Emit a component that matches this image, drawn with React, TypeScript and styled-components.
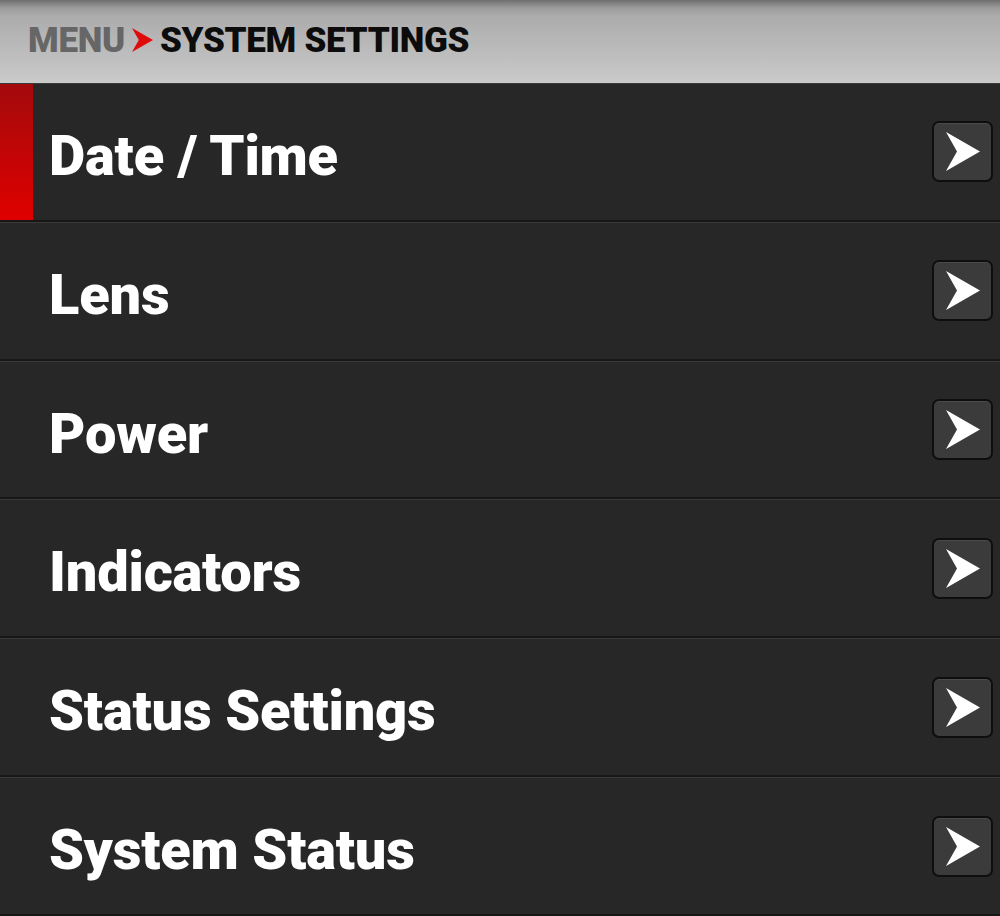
import React, { FunctionComponent } from "react";
import styled, { createGlobalStyle } from "styled-components";

const GlobalStyle = createGlobalStyle`
  html, body {
    margin: 0;
    padding: 0;
    background: #262626;
  }
  body {
    font-family: Roboto, "Liberation Sans", sans-serif;
  }
`

const Screen = styled.div`
  width: 1000px;
  height: 916px;
  display: flex;
  flex-direction: column;
  overflow: hidden;
  background: #262626;
`

const Header = styled.div`
  height: 83px;
  flex: none;
  display: flex;
  align-items: center;
  padding-left: 28px;
  gap: 7px;
  background: linear-gradient(to bottom, #6f6f6f 0px, #9c9c9c 8px, #acacac 16px, #c4c4c4 70px, #cbcbcb 83px);
  box-sizing: border-box;
  padding-bottom: 2px;
`

const Crumb = styled.span<{ $active?: boolean }>`
  font-size: 35px;
  font-weight: 900;
  letter-spacing: -0.3px;
  color: ${props => props.$active ? "#0c0c0c" : "#666666"};
`

const List = styled.div`
  flex: 1;
  display: flex;
  flex-direction: column;
`

const Row = styled.div`
  position: relative;
  flex: 1;
  display: flex;
  align-items: center;
  padding: 0 7px 0 49px;
  background: #272727;
  border-top: 1px solid #3a3a3a;
  border-bottom: 2px solid #171717;
  box-sizing: border-box;
`

const Marker = styled.div`
  position: absolute;
  left: 0;
  top: 0;
  bottom: 0;
  width: 33px;
  background: linear-gradient(to bottom, #a30a0c, #e00000);
`

const Label = styled.span`
  flex: 1;
  font-size: 56px;
  font-weight: 900;
  color: #ffffff;
  letter-spacing: -0.2px;
  padding-top: 8px;
`

const ArrowButton = styled.button`
  width: 61px;
  height: 61px;
  padding: 0;
  display: flex;
  align-items: center;
  justify-content: center;
  background: #3b3b3b;
  border: 2px solid #0e0e0e;
  border-radius: 7px;
  box-shadow: inset 0 1px 0 #4a4a4a;
  cursor: pointer;
`

const Chevron: FunctionComponent<{ color: string; size: number }> = ({ color, size }) => (
  <svg width={size} height={size * 1.15} viewBox="0 0 34 39">
    <path d="M0 0 L34 19.5 L0 39 L11 19.5 Z" fill={color} />
  </svg>
)

const items = [
  "Date / Time",
  "Lens",
  "Power",
  "Indicators",
  "Status Settings",
  "System Status",
]

const App: FunctionComponent = () => {
  return <>
    <GlobalStyle />
    <Screen>
      <Header>
        <Crumb>MENU</Crumb>
        <Chevron color="#e00a0a" size={21} />
        <Crumb $active>SYSTEM SETTINGS</Crumb>
      </Header>
      <List>
        {items.map((item, i) => (
          <Row key={item}>
            {i === 0 && <Marker />}
            <Label>{item}</Label>
            <ArrowButton>
              <Chevron color="#ffffff" size={34} />
            </ArrowButton>
          </Row>
        ))}
      </List>
    </Screen>
  </>
}

export default App
